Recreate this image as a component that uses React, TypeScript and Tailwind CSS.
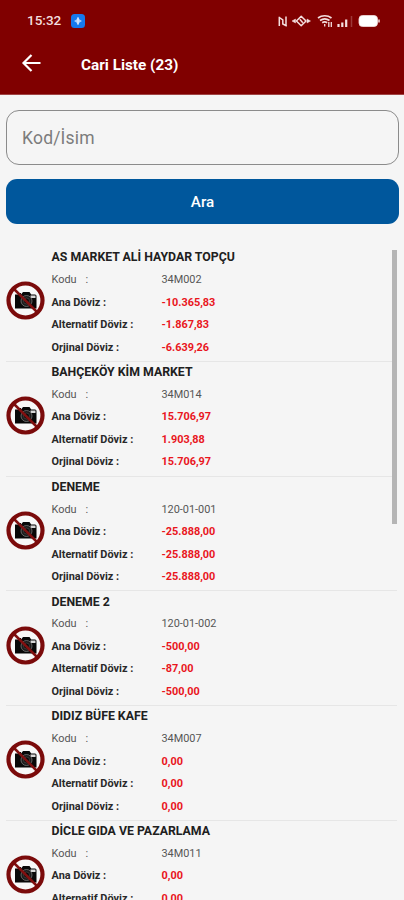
import { useState } from 'react';

interface Account {
  name: string;
  code: string;
  main: string;
  alternative: string;
  original: string;
}

const accounts: Account[] = [
  { name: 'AS MARKET ALİ HAYDAR TOPÇU', code: '34M002', main: '-10.365,83', alternative: '-1.867,83', original: '-6.639,26' },
  { name: 'BAHÇEKÖY KİM MARKET', code: '34M014', main: '15.706,97', alternative: '1.903,88', original: '15.706,97' },
  { name: 'DENEME', code: '120-01-001', main: '-25.888,00', alternative: '-25.888,00', original: '-25.888,00' },
  { name: 'DENEME 2', code: '120-01-002', main: '-500,00', alternative: '-87,00', original: '-500,00' },
  { name: 'DIDIZ BÜFE KAFE', code: '34M007', main: '0,00', alternative: '0,00', original: '0,00' },
  { name: 'DİCLE GIDA VE PAZARLAMA', code: '34M011', main: '0,00', alternative: '0,00', original: '0,00' },
];

function StatusBar() {
  return (
    <div className="flex h-[41px] items-center pl-[27px] pr-[23px] text-[#f3dfdf]">
      <span className="w-[36px] text-[13.5px] font-medium leading-none">15:32</span>
      <svg className="ml-2 h-[14px] w-[14px]" viewBox="0 0 14 14">
        <rect width="14" height="14" rx="3.5" fill="#1479ee" />
        <path d="M7 2.8L8.5 5.5 11 7 8.5 8.5 7 11.2 5.5 8.5 3 7l2.500-1.500z" fill="#a9d0ff" />
        <path d="M7 3.500v7" stroke="#e6f1ff" strokeWidth="1" />
      </svg>
      <svg className="ml-auto h-[14px] w-[104px]" viewBox="0 0 104 14" fill="none" stroke="currentColor">
        {/* NFC */}
        <path d="M2.300 12V2.800M2.300 3.500l3.500 2.500v4l4 2M9 2.500v9" strokeWidth="1.500" />
        {/* vibrate */}
        <path d="M15 7l3.500-2v4zM33.500 7L30 5v4z" fill="currentColor" strokeWidth=".5" />
        <path d="M24.200 2.200L29 7l-4.800 4.800L19.400 7z" strokeWidth="1.500" strokeLinejoin="round" />
        <path d="M22.800 5.200l3 3.600" strokeWidth="1.500" />
        {/* wifi */}
        <path d="M41 4c4-3 9.500-3 13.500 0M43 6.500c3-2.200 6.500-2.200 9.500 0M45.200 8.800c1.500-1 3.500-1 5 0" strokeWidth="1.700" />
        <path d="M47.700 10v2.500M51.800 8v5M54.300 8v5" strokeWidth="1.300" />
        {/* signal */}
        <path d="M61.500 10v3M65.300 8.500V13M69.200 5.500V13" strokeWidth="2.200" />
        <path d="M74.500 2v11" strokeWidth="1.500" opacity=".25" />
        {/* battery */}
        <rect x="82" y="1.500" width="18.500" height="11" rx="3.500" fill="#fff" strokeWidth=".8" />
        <path d="M102 5.500v3" strokeWidth="1.500" />
      </svg>
    </div>
  );
}

function NoPhoto() {
  return (
    <svg className="mb-[6px] h-[39px] w-[39px] shrink-0" viewBox="0 0 39 39">
      <circle cx="19.5" cy="19.5" r="17.2" fill="#f8f8f8" />
      <path d="M9 13.5h3v-1.500h3v1.500l2-2.500h6.500l1.700 2.500H29a1.500 1.500 0 0 1 1.500 1.500V27.500H9z" fill="#080808" />
      <path d="M24.500 14.500h5v2.500h-5z" fill="#d9d9d9" />
      <circle cx="20.5" cy="20" r="5.5" fill="#1c1c1c" stroke="#777" strokeWidth=".8" />
      <circle cx="20.5" cy="20" r="3" fill="#080808" stroke="#555" strokeWidth=".6" />
      <path d="M7.500 7.500l24 24" stroke="#801010" strokeWidth="2.500" />
      <circle cx="19.5" cy="19.5" r="17" fill="none" stroke="#7b0b0b" strokeWidth="4.200" />
    </svg>
  );
}

function AmountRow({ label, value }: { label: string; value: string }) {
  return (
    <div className="flex h-[22.5px] items-center font-bold">
      <span className="w-[110px] text-[#292929]">{label}</span>
      <span className="text-[#e9161d]">{value}</span>
    </div>
  );
}

function AccountItem({ account }: { account: Account }) {
  return (
    <li className="flex h-[114.75px] shrink-0 items-center border-b border-[#e6e6e6]">
      <NoPhoto />
      <div className="ml-[6.5px] h-full text-[10.9px]">
        <h2 className="flex h-[22px] items-center whitespace-nowrap pb-[1px] text-[12.3px] font-bold text-[#202020]">{account.name}</h2>
        <div className="flex h-[22.5px] items-center text-[#555]">
          <span className="w-[34px]">Kodu</span>
          <span className="w-[76px]">:</span>
          <span>{account.code}</span>
        </div>
        <AmountRow label="Ana Döviz :" value={account.main} />
        <AmountRow label="Alternatif Döviz :" value={account.alternative} />
        <AmountRow label="Orjinal Döviz :" value={account.original} />
      </div>
    </li>
  );
}

export default function App() {
  const [query, setQuery] = useState('');

  return (
    <div className="flex h-[900px] w-[404px] flex-col overflow-hidden bg-[#f5f5f5] font-[Roboto,sans-serif]">
      <header className="h-[95px] shrink-0 border-b border-[#a04444] bg-[#800000] text-white">
        <StatusBar />
        <div className="flex h-[45px] items-center pl-[21px]">
          <button aria-label="Geri" className="mb-[2px]">
            <svg className="h-[18px] w-[20px]" viewBox="0 0 20 18" fill="none" stroke="currentColor" strokeWidth="2.2">
              <path d="M19.500 9H2.500M10.500 1l-8 8 8 8" />
            </svg>
          </button>
          <h1 className="ml-[40px] mt-[3px] text-[15.3px] font-bold">Cari Liste (23)</h1>
        </div>
      </header>
      <main className="flex min-h-0 flex-1 flex-col px-[6px] pt-[15px]">
        <input
          value={query}
          onChange={(e) => setQuery(e.target.value)}
          placeholder="Kod/İsim"
          className="h-[55px] w-[393px] shrink-0 rounded-[13px] border border-[#8b8b8b] px-[15px] text-[17.5px] tracking-[0.2px] text-[#333] outline-none placeholder:text-[#7c7c7c]"
        />
        <button className="mt-[14px] h-[45px] w-[393px] shrink-0 rounded-[11px] bg-[#00579c] pt-[2px] text-[15.2px] font-medium text-white">Ara</button>
        <div className="mt-[23px] flex min-h-0 flex-1 overflow-hidden">
          <ul className="w-[391px] shrink-0">
            {accounts.map((account) => (
              <AccountItem key={account.code} account={account} />
            ))}
          </ul>
          <div className="-ml-[5px] mt-[2.5px] h-[274px] w-[5px] shrink-0 bg-[#b5b5b5]" />
        </div>
      </main>
    </div>
  );
}
